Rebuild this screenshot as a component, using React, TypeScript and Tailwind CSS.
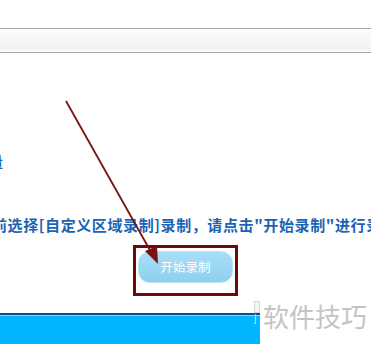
export default function App() {
  return (
    <div
      className="relative w-[371px] h-[345px] overflow-hidden bg-white"
      style={{ fontFamily: '"Noto Sans CJK SC", "Liberation Sans", sans-serif' }}
    >
      {/* toolbar strip */}
      <div className="mt-[28px] h-[25px] border-y border-[#a9a9a9] bg-gradient-to-b from-[#fdfdfd] to-[#f0f0f0] shadow-[inset_0_-2px_0_#fafafa]" />

      {/* cut-off line on the left */}
      <div className="mt-[100px] h-[16px] overflow-hidden whitespace-nowrap text-[14px] leading-[16px] font-bold text-[#1b64b4]">
        <span className="ml-[-11px]">量</span>
      </div>

      {/* hint line */}
      <div className="mt-[46px] h-[20px] overflow-hidden whitespace-nowrap text-[15px] leading-[20px] font-bold tracking-[0.6px] text-[#1b64b4]">
        <span className="ml-[-8px]">前选择[自定义区域录制]录制，请点击"开始录制"进行录制</span>
      </div>

      {/* start button, framed */}
      <div className="mt-[10px] flex">
        <div className="ml-[133px] w-[105px] h-[51px] border-[3px] border-[#6b0a0a] px-[2px] pt-[3px]">
          <button className="w-full h-[32px] rounded-[12px] border border-[#b8e2f5] bg-gradient-to-b from-[#a9def6] to-[#8dd0f0] text-[12.5px] text-white">
            开始录制
          </button>
        </div>
      </div>

      {/* blue bar at bottom */}
      <div className="mt-[17px] w-[260px] h-[31px] border-t-2 border-[#0b4f7c] bg-[#02b3fd] shadow-[inset_0_1px_0_#7fd3f5]" />

      {/* arrow annotation */}
      <svg className="absolute left-0 top-0" width="371" height="345" viewBox="0 0 371 345">
        <line x1="66" y1="101" x2="151" y2="252" stroke="#7a1212" strokeWidth="1.8" />
        <polygon points="158,264 145,251 157,246" fill="#7a1212" />
      </svg>

      {/* watermark */}
      <div className="absolute left-[254px] top-[301px] flex items-start">
        <div className="flex flex-col items-start mr-[3px]">
          <span className="w-[6px] h-[12px] border border-[#d8d8d8] bg-[#f4f4f4]" />
          <span className="text-[9px] leading-[10px] text-[#cfeefc]">j</span>
        </div>
        <span className="text-[26px] leading-[30px] text-[#c4c4c4]">软件技巧</span>
      </div>
    </div>
  )
}
